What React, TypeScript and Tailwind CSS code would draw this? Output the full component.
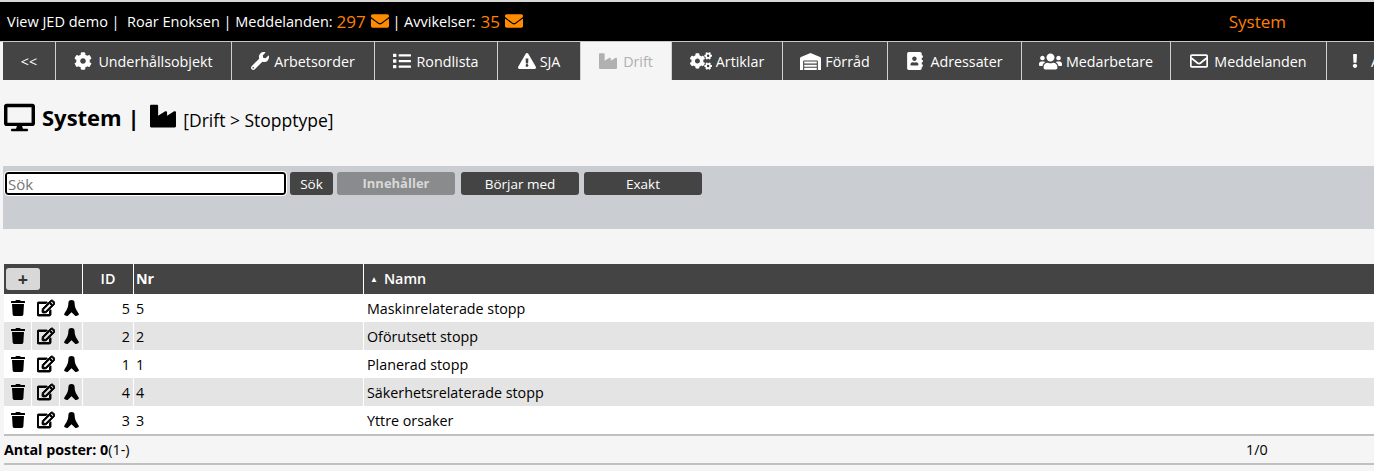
import React from "react";
import {
  FaCog, FaWrench, FaList, FaExclamationTriangle, FaIndustry, FaCogs, FaWarehouse,
  FaAddressBook, FaUsers, FaRegEnvelope, FaExclamation, FaEnvelope, FaDesktop, FaTrash, FaRegEdit,
} from "react-icons/fa";

function Tab({ w, icon, label, active }: { w: string; icon?: React.ReactNode; label: string; active?: boolean }) {
  return (
    <div className={`${w} shrink-0 h-full flex items-center justify-center gap-[4px] border-r border-[#d0d0d0] whitespace-nowrap ${active ? "bg-[#f5f5f5] text-[#b0b0b0]" : "bg-[#444444] text-white"}`}>
      {icon}
      <span className="pt-[1px]">{label}</span>
    </div>
  );
}

function RibbonIcon() {
  return (
    <svg width="15" height="18" viewBox="0 0 16 17" fill="currentColor">
      <path d="M8 0c2.3 0 3.3 1.2 3.3 3 0 2.6.5 5 1.8 7.4l2.5 4c.5.8.3 1.4-.4 1.7l-2.2.8c-.6.2-1.1 0-1.4-.5L8 13l-3.6 3.4c-.3.5-.8.7-1.4.5l-2.2-.8c-.7-.3-.9-.9-.4-1.7l2.5-4C4.2 8 4.7 5.6 4.7 3 4.7 1.2 5.7 0 8 0z" />
    </svg>
  );
}

const rows = [
  { id: 5, nr: 5, name: "Maskinrelaterade stopp" },
  { id: 2, nr: 2, name: "Oförutsett stopp" },
  { id: 1, nr: 1, name: "Planerad stopp" },
  { id: 4, nr: 4, name: "Säkerhetsrelaterade stopp" },
  { id: 3, nr: 3, name: "Yttre orsaker" },
];

export default function App() {
  return (
    <div className="w-[1374px] h-[471px] overflow-hidden bg-[#f5f5f5] text-[14.3px] text-black font-['Open_Sans',sans-serif]">
      <div className="h-[2px] bg-[#d8d8d8]" />
      <div className="h-[39px] bg-black text-white text-[14.5px] flex items-center pl-[7px] pt-[1px] whitespace-nowrap">
        <span>View JED demo |&nbsp; Roar Enoksen | Meddelanden:&nbsp;</span>
        <span className="text-[#ff7f00] text-[17px]">297</span>
        <FaEnvelope className="text-[#ff8c00] text-[18px] ml-[5px] mb-[3px]" />
        <span>&nbsp;| Avvikelser:&nbsp;</span>
        <span className="text-[#ff7f00] text-[17px] ml-[1px]">35</span>
        <FaEnvelope className="text-[#ff8c00] text-[18px] ml-[5px] mb-[3px]" />
        <span className="ml-auto mr-[88px] text-[#ff7f00] text-[17px]">System</span>
      </div>
      <div className="h-[39px] border-t border-[#c8c8c8] flex pl-[3px] overflow-hidden">
        <Tab w="w-[53px]" label="<<" />
        <Tab w="w-[176px]" icon={<FaCog className="text-[18px] mr-[2px]" />} label="Underhållsobjekt" />
        <Tab w="w-[143px]" icon={<FaWrench className="text-[18px] mr-[1px]" />} label="Arbetsorder" />
        <Tab w="w-[123px]" icon={<FaList className="text-[18px] mr-[1px]" />} label="Rondlista" />
        <Tab w="w-[83px]" icon={<FaExclamationTriangle className="text-[18px]" />} label="SJA" />
        <Tab w="w-[91px]" active icon={<FaIndustry className="text-[18px] mr-[2px]" />} label="Drift" />
        <Tab w="w-[111px]" icon={<FaCogs className="text-[22px]" />} label="Artiklar" />
        <Tab w="w-[105px]" icon={<FaWarehouse className="text-[21px]" />} label="Förråd" />
        <Tab w="w-[134px]" icon={<FaAddressBook className="text-[18px] mr-[2px]" />} label="Adressater" />
        <Tab w="w-[149px]" icon={<FaUsers className="text-[23px]" />} label="Medarbetare" />
        <Tab w="w-[156px]" icon={<FaRegEnvelope className="text-[18px] mr-[2px]" />} label="Meddelanden" />
        <div className="w-[47px] shrink-0 h-full bg-[#444444] text-white flex items-center pl-[21px] gap-[9px] whitespace-nowrap overflow-hidden">
          <FaExclamation className="text-[14px] shrink-0" />
          <span className="pt-[1px]">A</span>
        </div>
      </div>

      <div className="h-[86px] flex items-start pl-[4px] pt-[21px]">
        <FaDesktop className="text-[31px] mr-[7px] mt-[1px]" />
        <span className="text-[22px] font-bold leading-[32px]">System&nbsp;|&nbsp;</span>
        <FaIndustry className="text-[26px] ml-[5px] mr-[7px] mt-[2px]" />
        <span className="text-[17.5px] mt-[7px] leading-[24px]">[Drift &gt; Stopptype]</span>
      </div>

      <div className="ml-[3px] h-[63px] bg-[#caced3] flex items-start gap-[4px] pt-[6px] pl-[2px]">
        <input
          placeholder="Sök"
          className="w-[281px] h-[23px] bg-white border-2 border-black rounded-[3px] outline outline-1 outline-white px-[1px] text-[15px] text-black placeholder:text-[#757575]"
        />
        <button className="w-[43px] h-[23px] bg-[#444444] text-white text-[13.5px] rounded-[3px] pt-[1px]">Sök</button>
        <button className="w-[118px] h-[23px] bg-[#8a8b8c] text-[#d8d8d8] font-bold text-[13px] rounded-[3px] pt-[1px]">Innehåller</button>
        <button className="w-[118px] h-[23px] bg-[#444444] text-white text-[13.5px] rounded-[3px] ml-[2px] pt-[1px]">Börjar med</button>
        <button className="w-[118px] h-[23px] bg-[#444444] text-white text-[13.5px] rounded-[3px] ml-[1px] pt-[1px]">Exakt</button>
      </div>

      <div className="ml-[4px] mt-[35px]">
        <div className="h-[30px] bg-[#444444] text-white flex items-center">
          <div className="w-[79px] h-full flex items-center pl-[2px] border-r border-white shrink-0">
            <div className="w-[34px] h-[22px] bg-[#d8d8d8] text-[#333333] rounded-[3px] flex items-center justify-center font-bold text-[18px] leading-none">+</div>
          </div>
          <div className="w-[51px] h-full flex items-center justify-center border-r border-white shrink-0 font-semibold">ID</div>
          <div className="w-[230px] h-full flex items-center pl-[2px] border-r border-white shrink-0 font-bold">Nr</div>
          <div className="flex-1 h-full flex items-center pl-[6px] font-semibold">
            <span className="text-[8px] mr-[6px]">▲</span>Namn
          </div>
        </div>
        {rows.map((r, i) => (
          <div key={r.id} className={`h-[28px] flex items-center ${i % 2 ? "bg-[#e4e4e4]" : "bg-white"}`}>
            <div className="w-[28px] h-full flex items-center justify-center border-r border-white shrink-0"><FaTrash className="text-[16px]" /></div>
            <div className="w-[28px] h-full flex items-center justify-center border-r border-white shrink-0"><FaRegEdit className="text-[18px] ml-[1px]" stroke="currentColor" strokeWidth={30} /></div>
            <div className="w-[23px] h-full flex items-center justify-center border-r border-white shrink-0"><RibbonIcon /></div>
            <div className="w-[51px] h-full flex items-center justify-end pr-[3px] pt-[1px] border-r border-white shrink-0">{r.id}</div>
            <div className="w-[230px] h-full flex items-center pl-[2px] pt-[1px] border-r border-white shrink-0">{r.nr}</div>
            <div className="flex-1 pl-[3px] pt-[1px]">{r.name}</div>
          </div>
        ))}
        <div className="h-[29px] border-t-2 border-[#c0c0c0] flex items-center relative pt-[1px]">
          <span className="font-bold">Antal poster: 0</span>
          <span>(1-)</span>
          <span className="absolute left-[1242px]">1/0</span>
        </div>
        <div className="h-[2px] bg-[#c0c0c0]" />
      </div>
    </div>
  );
}
